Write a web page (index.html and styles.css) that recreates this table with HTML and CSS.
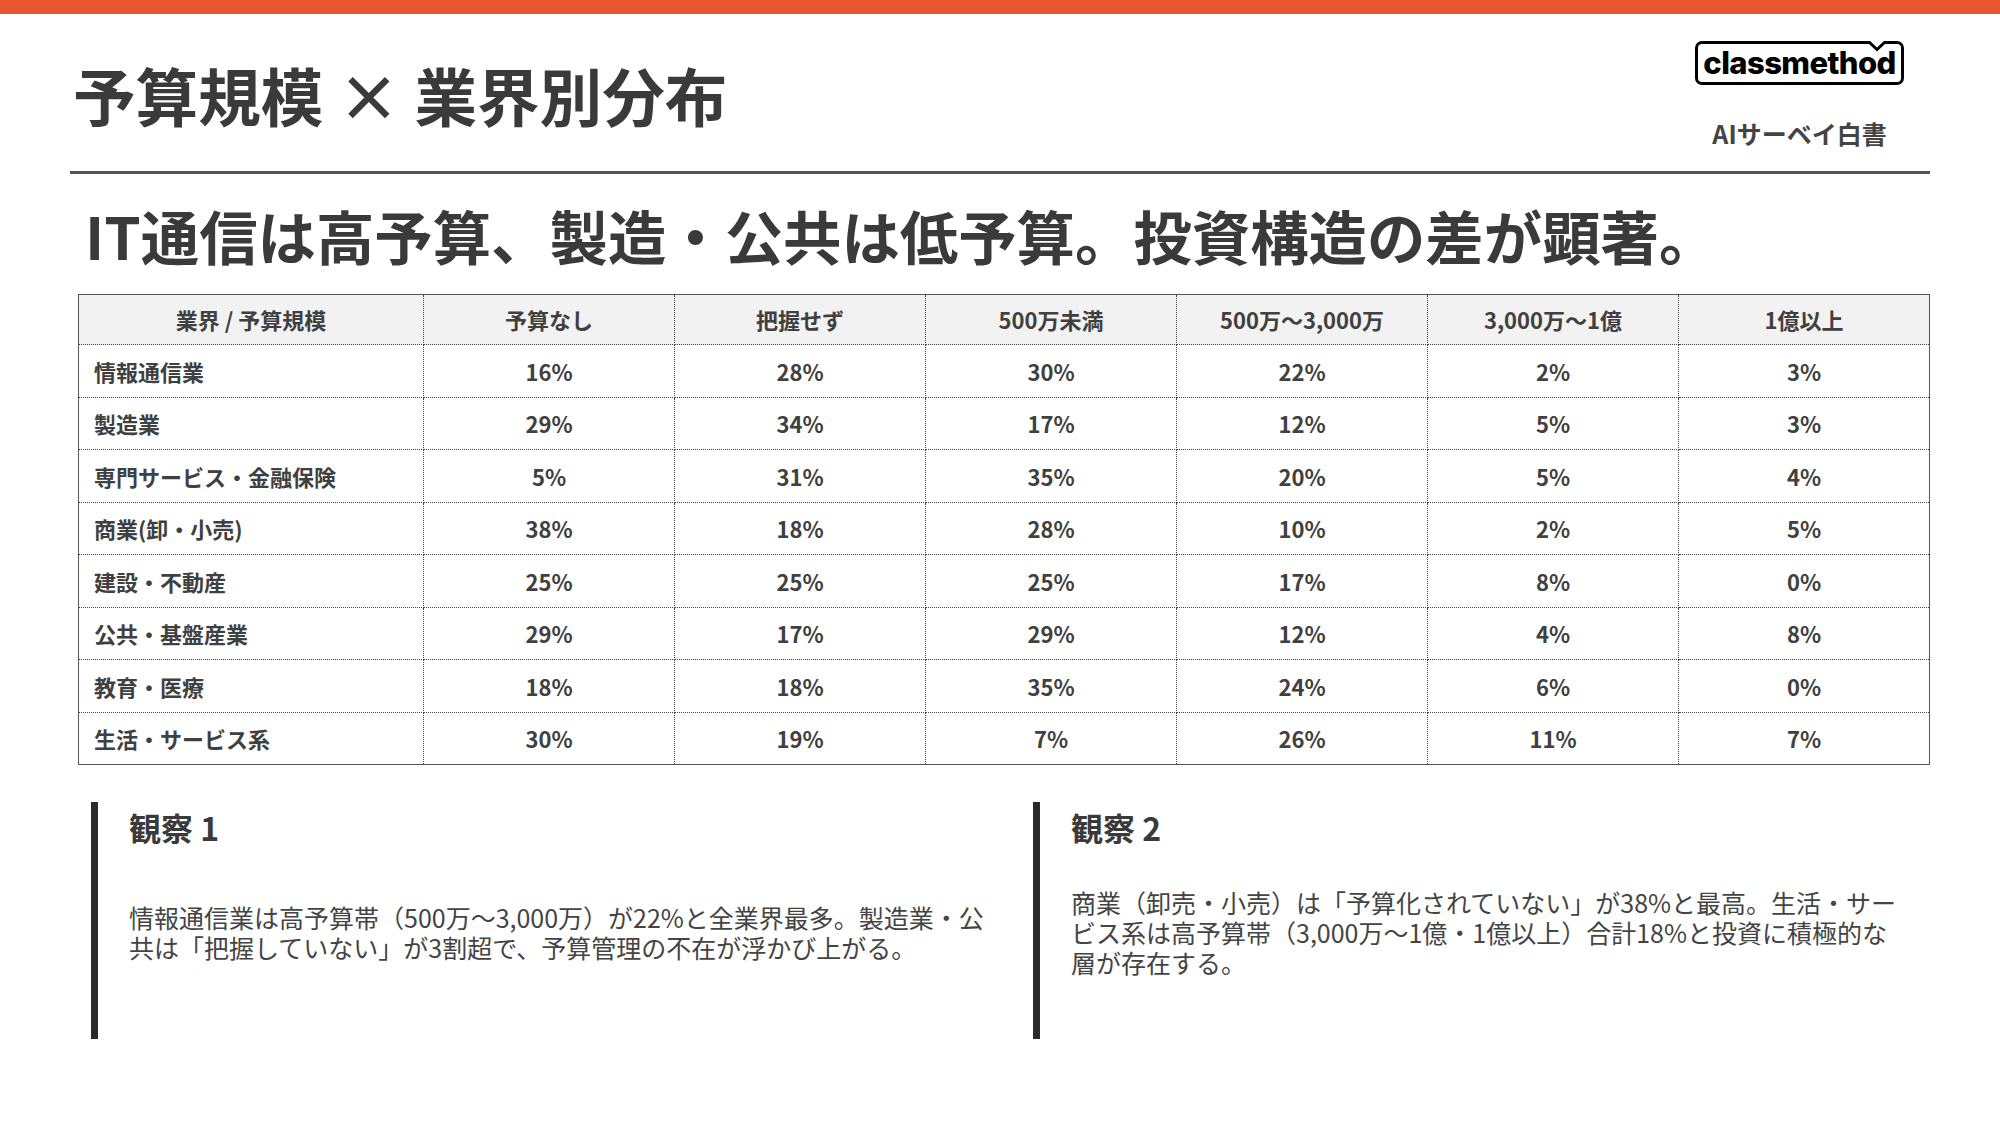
FILE: index.html
```html
<!DOCTYPE html>
<html lang="ja">
<head>
<meta charset="utf-8">
<title>予算規模 × 業界別分布</title>
<link rel="stylesheet" href="styles.css">
</head>
<body>
<div class="topbar"></div>
<div class="page">
  <header class="header">
    <h1 class="title">予算規模 × 業界別分布</h1>
    <div class="brand">
      <div class="logo">
        <span class="logo-text">classmethod</span>
        <svg class="notch" width="20" height="12" viewBox="0 0 20 12" xmlns="http://www.w3.org/2000/svg">
          <path d="M0 0 H20 V3 L10 11 L0 3 Z" fill="#fff"/>
          <path d="M0 1.5 H2.5 L10 8.5 L17.5 1.5 H20" fill="none" stroke="#000" stroke-width="3" stroke-linejoin="miter"/>
        </svg>
      </div>
      <div class="brand-sub">AIサーベイ白書</div>
    </div>
  </header>
  <div class="rule"></div>
  <h2 class="subtitle">IT通信は高予算、製造・公共は低予算。投資構造の差が顕著。</h2>
  <table class="grid">
    <colgroup>
      <col class="c-first">
      <col><col><col><col><col><col>
    </colgroup>
    <thead>
      <tr><th>業界 / 予算規模</th><th>予算なし</th><th>把握せず</th><th>500万未満</th><th>500万～3,000万</th><th>3,000万～1億</th><th>1億以上</th></tr>
    </thead>
    <tbody>
      <tr><td>情報通信業</td><td>16%</td><td>28%</td><td>30%</td><td>22%</td><td>2%</td><td>3%</td></tr>
      <tr><td>製造業</td><td>29%</td><td>34%</td><td>17%</td><td>12%</td><td>5%</td><td>3%</td></tr>
      <tr><td>専門サービス・金融保険</td><td>5%</td><td>31%</td><td>35%</td><td>20%</td><td>5%</td><td>4%</td></tr>
      <tr><td>商業(卸・小売)</td><td>38%</td><td>18%</td><td>28%</td><td>10%</td><td>2%</td><td>5%</td></tr>
      <tr><td>建設・不動産</td><td>25%</td><td>25%</td><td>25%</td><td>17%</td><td>8%</td><td>0%</td></tr>
      <tr><td>公共・基盤産業</td><td>29%</td><td>17%</td><td>29%</td><td>12%</td><td>4%</td><td>8%</td></tr>
      <tr><td>教育・医療</td><td>18%</td><td>18%</td><td>35%</td><td>24%</td><td>6%</td><td>0%</td></tr>
      <tr><td>生活・サービス系</td><td>30%</td><td>19%</td><td>7%</td><td>26%</td><td>11%</td><td>7%</td></tr>
    </tbody>
  </table>
  <section class="obs">
    <div class="card">
      <h3 class="card-title">観察 1</h3>
      <div class="card-body"><p>情報通信業は高予算帯（500万〜3,000万）が22%と全業界最多。製造業・公共は「把握していない」が3割超で、予算管理の不在が浮かび上がる。</p></div>
    </div>
    <div class="card card-right">
      <h3 class="card-title">観察 2</h3>
      <div class="card-body"><p>商業（卸売・小売）は「予算化されていない」が38%と最高。生活・サービス系は高予算帯（3,000万〜1億・1億以上）合計18%と投資に積極的な層が存在する。</p></div>
    </div>
  </section>
</div>
</body>
</html>
```

FILE: styles.css
```css
html, body {
  margin: 0;
  padding: 0;
  background: #ffffff;
}
body {
  font-family: "Noto Sans CJK JP", "Noto Sans", sans-serif;
  color: #3d3d3d;
  width: 2000px;
  height: 1125px;
  overflow: hidden;
}
.topbar {
  height: 14px;
  background: #ea5631;
}
.page {
  padding: 0 70px;
}
.header {
  display: flex;
  justify-content: space-between;
  align-items: flex-start;
  padding-top: 27px;
  padding-bottom: 23px;
}
.title {
  margin: 15px 0 0 3px;
  font-size: 62.6px;
  line-height: 1.2;
  font-weight: 700;
  color: #3a3a3a;
}
.brand {
  display: flex;
  flex-direction: column;
  align-items: center;
  margin-right: 26px;
}
.logo {
  position: relative;
  width: 209px;
  height: 44px;
  box-sizing: border-box;
  border: 3px solid #000;
  border-radius: 7px;
  display: flex;
  align-items: center;
  justify-content: center;
}
.logo-text {
  font-family: "Inter", "Noto Sans", sans-serif;
  font-weight: 800;
  font-size: 31px;
  line-height: 1;
  letter-spacing: -0.6px;
  color: #000;
  margin-top: -2px;
}
.notch {
  position: absolute;
  top: -3px;
  right: 14px;
  display: block;
}
.brand-sub {
  margin-top: 33px;
  font-size: 25px;
  line-height: 1.2;
  font-weight: 700;
  color: #444;
}
.rule {
  height: 3px;
  background: #555;
}
.subtitle {
  margin: 26px 0 0 15px;
  font-size: 58.4px;
  line-height: 1.2;
  font-weight: 700;
  color: #3a3a3a;
}
.grid {
  margin: 24px 0 0 8px;
  width: 1852px;
  table-layout: fixed;
  border-collapse: collapse;
  border: 1.5px solid #555;
  font-size: 22px;
  font-weight: 700;
  color: #404040;
}
.c-first {
  width: 345px;
}
.grid th,
.grid td {
  border: 1px dotted #444;
  text-align: center;
  vertical-align: middle;
  padding: 0;
  line-height: 1.3;
}
.grid thead tr {
  height: 50px;
  background: #f2f2f2;
}
.grid tbody tr {
  height: 52.5px;
}
.grid td:first-child {
  text-align: left;
  padding-left: 15px;
}
.obs {
  display: grid;
  grid-template-columns: 905px 1fr;
  column-gap: 37px;
  margin: 37px 0 0 21px;
}
.card {
  display: flex;
  flex-direction: column;
  height: 237px;
  border-left: 7px solid #2a2a2a;
  padding-left: 31px;
  box-sizing: border-box;
}
.card-right {
  padding-right: 25px;
}
.card-title {
  margin: 5px 0 0;
  font-size: 32px;
  line-height: 1.3;
  font-weight: 700;
  color: #3a3a3a;
}
.card-body {
  flex: 1;
  display: flex;
  align-items: center;
  padding-bottom: 24px;
}
.card-body p {
  margin: 0;
  font-size: 25px;
  line-height: 1.2;
  font-weight: 400;
  color: #444;
}
```
